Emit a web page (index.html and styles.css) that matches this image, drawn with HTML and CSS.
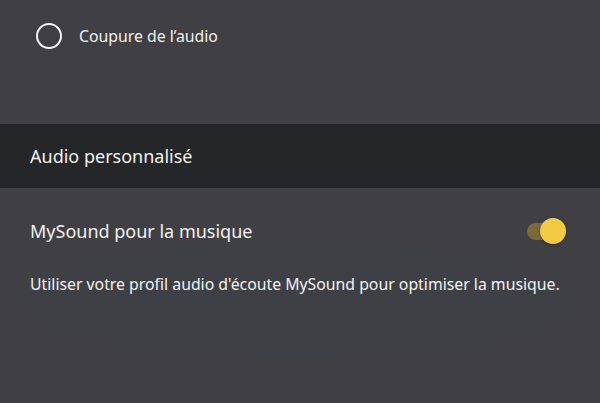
FILE: index.html
```html
<!DOCTYPE html>
<html lang="fr">
<head>
    <meta charset="UTF-8">
    <title>Audio</title>
    <link rel="stylesheet" href="styles.css">
</head>
<body>
    <div id="screen">
        <div class="option">
            <span class="radio"></span>
            <span class="option-label">Coupure de l’audio</span>
        </div>

        <div class="section-head">Audio personnalisé</div>

        <div class="setting">
            <span class="setting-label">MySound pour la musique</span>
            <span class="toggle on"><span class="knob"></span></span>
        </div>
        <p class="setting-desc">Utiliser votre profil audio d'écoute MySound pour optimiser la musique.</p>
    </div>
</body>
</html>
```

FILE: styles.css
```css
*{
    margin:0;
    padding:0;
    box-sizing:border-box;
}
html,body{
    height:100%;
}
body{
    background:#3f4045;
    color:#f2f2f2;
    font-family:"Noto Sans","Open Sans",sans-serif;
}
#screen{
    width:600px;
    height:403px;
    overflow:hidden;
    background:radial-gradient(ellipse 420px 90px at 300px 300px,#3f4045 60%,#403f44 100%);
}
.option{
    display:flex;
    align-items:center;
    height:72px;
    padding-left:36px;
}
.radio{
    width:26px;
    height:26px;
    border:2.5px solid #f4f4f4;
    border-radius:50%;
    margin-right:17px;
}
.option-label{
    font-size:15.8px;
}
.section-head{
    margin-top:52px;
    height:64px;
    background:#252628;
    display:flex;
    align-items:center;
    padding-left:30px;
    font-size:18px;
}
.setting{
    display:flex;
    align-items:center;
    justify-content:space-between;
    height:86px;
    padding:0 41px 0 30px;
}
.setting-label{
    font-size:18px;
}
.toggle{
    position:relative;
    width:32px;
    height:17px;
    border-radius:9px;
    background:#7a6b36;
}
.toggle .knob{
    position:absolute;
    right:-7px;
    top:-4.5px;
    width:26px;
    height:26px;
    border-radius:50%;
    background:#f3ca43;
    box-shadow:0 1px 3px rgba(0,0,0,.35);
}
.setting-desc{
    padding:0 0 0 30px;
    font-size:15.8px;
    line-height:20px;
}
```
